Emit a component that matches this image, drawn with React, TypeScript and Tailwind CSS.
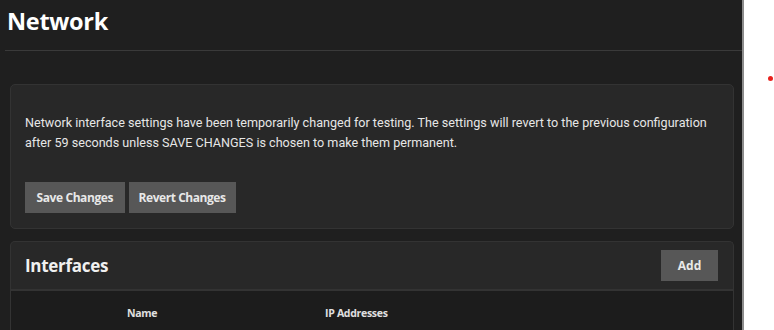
import React from 'react'

export default function App() {
  return (
    <div className="flex h-[330px] w-[774px] overflow-hidden bg-white" style={{ fontFamily: 'Roboto, "Liberation Sans", sans-serif' }}>
      {/* Main panel */}
      <div className="w-[744px] shrink-0 bg-[#1f1f1f] border-r-2 border-[#8c8c8c]">
        {/* Header */}
        <div className="ml-[5px] h-[51px] border-b border-[#3a3a3a] pl-[2px] pt-[4px]">
          <h1 className="text-[23.5px] font-bold text-white leading-[34px] tracking-[-0.3px]" style={{ fontFamily: '"Open Sans", sans-serif' }}>
            Network
          </h1>
        </div>

        {/* Test changes notice */}
        <div className="ml-[10px] mr-[8px] mt-[33px] rounded-[5px] border border-[#333333] bg-[#282828] px-[14px] pt-[28px] pb-[15px]">
          <p className="text-[12.6px] leading-[20px] text-[#e6e6e6]">
            Network interface settings have been temporarily changed for testing. The settings will revert to the previous configuration
            after 59 seconds unless SAVE CHANGES is chosen to make them permanent.
          </p>
          <div className="mt-[29px] flex gap-[4px]">
            <button className="h-[31px] bg-[#575757] px-[11.5px] text-[12px] font-bold text-[#e8e8e8] tracking-[-0.4px]" style={{ fontFamily: '"Open Sans", sans-serif' }}>
              Save Changes
            </button>
            <button className="h-[31px] bg-[#575757] px-[10px] text-[12px] font-bold text-[#e8e8e8] tracking-[-0.45px]" style={{ fontFamily: '"Open Sans", sans-serif' }}>
              Revert Changes
            </button>
          </div>
        </div>

        {/* Interfaces */}
        <div className="ml-[10px] mr-[8px] mt-[12px] rounded-t-[5px] border border-b-0 border-[#333333] bg-[#282828]">
          <div className="flex h-[49px] items-center justify-between border-b-2 border-[#333333] pl-[14px] pr-[15px]">
            <h2 className="text-[17px] font-bold text-[#f0f0f0] tracking-[-0.3px]" style={{ fontFamily: '"Open Sans", sans-serif' }}>
              Interfaces
            </h2>
            <button className="h-[31px] w-[57px] bg-[#575757] text-[12px] font-bold text-[#e8e8e8]" style={{ fontFamily: '"Open Sans", sans-serif' }}>
              Add
            </button>
          </div>
          <div className="h-[60px] bg-[#1c1c1c]">
            <div className="flex pt-[15px] text-[10.5px] font-bold text-[#e0e0e0] tracking-[-0.3px]" style={{ fontFamily: '"Open Sans", sans-serif' }}>
              <span className="ml-[116px] w-[198px]">Name</span>
              <span>IP Addresses</span>
            </div>
          </div>
        </div>
      </div>

      {/* Right strip */}
      <div className="flex-1 pt-[76px] pl-[24px]">
        <div className="h-[5px] w-[5px] rounded-full bg-[#e8211d]" />
      </div>
    </div>
  )
}
